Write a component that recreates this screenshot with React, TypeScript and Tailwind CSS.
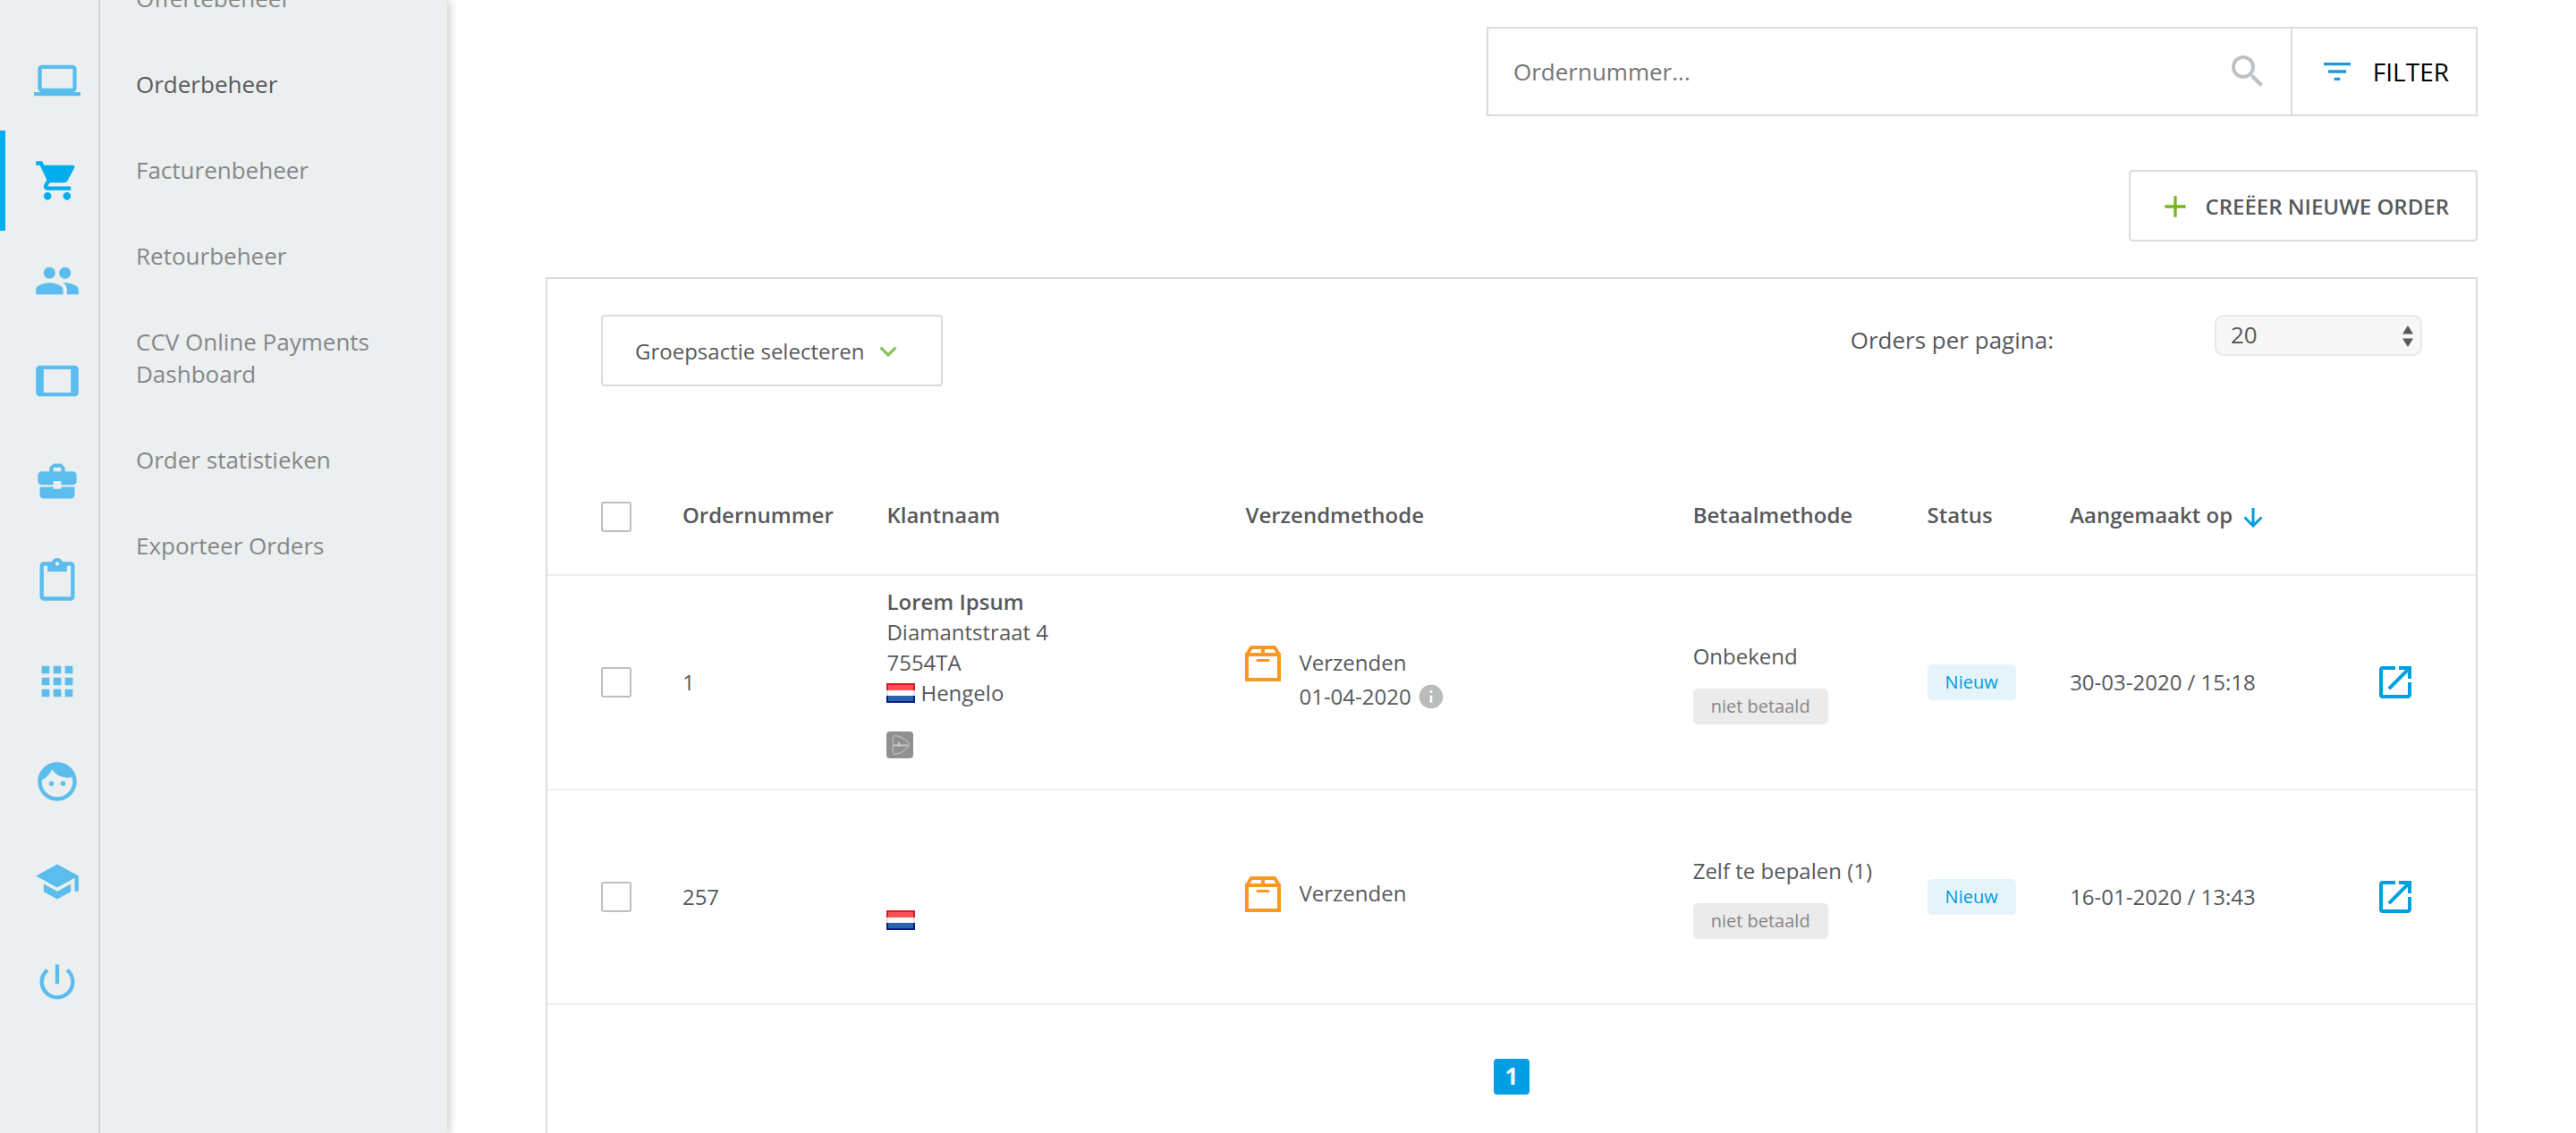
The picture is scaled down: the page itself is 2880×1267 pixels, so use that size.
import type { ReactNode } from 'react';
import {
  MdAdd,
  MdApps,
  MdBusinessCenter,
  MdContentPaste,
  MdExpandMore,
  MdFace,
  MdFilterList,
  MdInfo,
  MdLaptop,
  MdOpenInNew,
  MdPeople,
  MdPowerSettingsNew,
  MdSchool,
  MdSearch,
  MdShoppingCart,
  MdTablet,
} from 'react-icons/md';

const RAIL = [
  { label: 'Webshop', icon: MdLaptop },
  { label: 'Orders', icon: MdShoppingCart, active: true },
  { label: 'Klanten', icon: MdPeople },
  { label: 'Kassa', icon: MdTablet },
  { label: 'Zakelijk', icon: MdBusinessCenter },
  { label: 'Rapporten', icon: MdContentPaste },
  { label: 'Apps', icon: MdApps },
  { label: 'Account', icon: MdFace },
  { label: 'Academy', icon: MdSchool },
  { label: 'Uitloggen', icon: MdPowerSettingsNew },
];

const MENU = [
  'Offertebeheer',
  'Orderbeheer',
  'Facturenbeheer',
  'Retourbeheer',
  'CCV Online Payments Dashboard',
  'Order statistieken',
  'Exporteer Orders',
];

const ORDERS = [
  {
    id: '1',
    customer: { name: 'Lorem Ipsum', street: 'Diamantstraat 4', zip: '7554TA', city: 'Hengelo' },
    shipDate: '01-04-2020',
    payment: 'Onbekend',
    created: '30-03-2020 / 15:18',
  },
  {
    id: '257',
    customer: null,
    shipDate: null,
    payment: 'Zelf te bepalen (1)',
    created: '16-01-2020 / 13:43',
  },
];

function Checkbox({ label }: { label: string }) {
  return (
    <input
      type="checkbox"
      aria-label={label}
      className="block size-[34px] appearance-none rounded-[3px] border-2 border-[#bcbec0] bg-white checked:bg-[#009fe3]"
    />
  );
}

function Flag() {
  return (
    <svg className="h-[22px] w-8 shrink-0" viewBox="0 0 32 22" role="img" aria-label="Nederland">
      <rect width="32" height="8" fill="#dc1a20" />
      <rect x="2" y="2" width="28" height="6" fill="#fb5158" />
      <rect y="8" width="32" height="6" fill="#e3e3ea" />
      <rect x="2" y="8" width="28" height="6" fill="#fff" />
      <rect y="14" width="32" height="8" fill="#0a1f80" />
      <rect x="2" y="14" width="28" height="6" fill="#2a64ae" />
    </svg>
  );
}

function Parcel() {
  return (
    <svg className="size-10 shrink-0" viewBox="0 0 40 40" fill="none" stroke="#f9991f" strokeWidth="4" aria-hidden="true">
      <path d="M2 10h36v28H2z" />
      <path d="M2 10 7 2h26l5 8M20 2v8" />
      <path d="M14 16.500h12" strokeWidth="3" strokeLinecap="round" />
    </svg>
  );
}

function CarrierBadge() {
  return (
    <svg className="size-[30px]" viewBox="0 0 30 30" role="img" aria-label="Vervoerder">
      <rect width="30" height="30" rx="4" fill="#8f9091" />
      <path
        d="M7 9c0-4 2-5 5-4 5 1 9 4 12 7 2 2 2 4 0 6-3 3-7 6-12 7-3 1-5 0-5-4 1-4 1-8 0-12z"
        fill="none"
        stroke="#b5b6b7"
        strokeWidth="1.500"
      />
      <path d="M8 15.500h16M14 12v5" stroke="#c6c7c8" strokeWidth="2" />
    </svg>
  );
}

function Badge({ children, className }: { children: ReactNode; className: string }) {
  return <span className={`inline-block rounded-[5px] px-5 text-[20px] leading-10 ${className}`}>{children}</span>;
}

function Sidebar() {
  return (
    <aside className="z-10 flex w-[500px] shrink-0 bg-[#ebeff0] shadow-[2px_0_10px_rgba(0,0,0,0.22)]">
      <nav aria-label="Hoofdmenu" className="flex w-28 shrink-0 flex-col border-r-2 border-[#d1d5d7] pt-[34px]">
        {RAIL.map(({ label, icon: Icon, active }) => (
          <a
            key={label}
            href="#"
            aria-label={label}
            className={`flex h-28 items-center border-l-6 pl-8 ${
              active ? 'border-[#00aeef] text-[#00aeef]' : 'border-transparent text-[#5bbdee]'
            }`}
          >
            <Icon className="size-[52px]" />
          </a>
        ))}
      </nav>
      {/* scrolled down a little, so the first entry is half out of view */}
      <nav aria-label="Submenu" className="-mt-[50px] flex flex-1 flex-col pr-16 pl-10">
        {MENU.map(item => (
          <a
            key={item}
            href="#"
            className={`py-[30px] text-[26px] leading-9 ${item === 'Orderbeheer' ? 'text-[#58595b]' : 'text-[#868788]'}`}
          >
            {item}
          </a>
        ))}
      </nav>
    </aside>
  );
}

function OrderTable() {
  return (
    <table className="w-full table-fixed text-left">
      <colgroup>
        <col className="w-[7%]" />
        <col className="w-[10.6%]" />
        <col className="w-[18.6%]" />
        <col className="w-[23.2%]" />
        <col className="w-[12.15%]" />
        <col className="w-[7.4%]" />
        <col className="w-[14%]" />
        <col />
      </colgroup>
      <thead>
        <tr className="h-[133px] border-b-2 border-[#efefef]">
          <th className="pt-1 pl-[60px]">
            <Checkbox label="Alles selecteren" />
          </th>
          <th className="font-semibold">Ordernummer</th>
          <th className="font-semibold">Klantnaam</th>
          <th className="font-semibold">Verzendmethode</th>
          <th className="font-semibold">Betaalmethode</th>
          <th className="font-semibold">Status</th>
          <th className="font-semibold">
            <button className="flex items-center gap-3">
              Aangemaakt op
              <svg className="mt-1 h-6 w-[22px] text-[#0a9adb]" viewBox="0 0 22 24" fill="none" stroke="currentColor" strokeWidth="3" aria-hidden="true">
                <path d="M11 2v20M1.500 12.500 11 22l9.500-9.500" />
              </svg>
            </button>
          </th>
          <th aria-label="Acties" />
        </tr>
      </thead>
      <tbody>
        {ORDERS.map(o => (
          <tr key={o.id} className="h-60 border-b-2 border-[#efefef]">
            <td className="pl-[60px]">
              <Checkbox label={`Order ${o.id} selecteren`} />
            </td>
            <td>{o.id}</td>
            <td className="leading-[34px]">
              {o.customer ? (
                <>
                  <p className="font-semibold">{o.customer.name}</p>
                  <p>{o.customer.street}</p>
                  <p>{o.customer.zip}</p>
                  <p className="flex items-center gap-1.5">
                    <Flag />
                    {o.customer.city}
                  </p>
                  <div className="pt-[26px] pb-[22px]">
                    <CarrierBadge />
                  </div>
                </>
              ) : (
                <div className="pt-[52px]">
                  <Flag />
                </div>
              )}
            </td>
            <td className="pb-1.5">
              <div className="flex items-start gap-5">
                <Parcel />
                <div className="leading-[38px]">
                  <p>Verzenden</p>
                  {o.shipDate && (
                    <p className="flex items-center gap-1.5">
                      {o.shipDate}
                      <MdInfo className="size-8 text-[#b9bbbd]" />
                    </p>
                  )}
                </div>
              </div>
            </td>
            <td>
              <p className="mb-[18px] leading-9">{o.payment}</p>
              <Badge className="bg-[#ebebeb] text-[#868788]">niet betaald</Badge>
            </td>
            <td>
              <Badge className="bg-[#e5f4fb] text-[#009bdc]">Nieuw</Badge>
            </td>
            <td>{o.created}</td>
            <td className="pr-[66px]">
              <a href="#" aria-label={`Order ${o.id} openen`} className="ml-auto block w-12 text-[#009fe0]">
                <MdOpenInNew className="size-12" />
              </a>
            </td>
          </tr>
        ))}
      </tbody>
    </table>
  );
}

export default function App() {
  return (
    <div className="flex min-h-screen bg-white font-['Open_Sans','Noto_Sans',sans-serif] text-[24px] text-[#58595b]">
      <div className="flex w-full overflow-hidden">
        <Sidebar />
        <main className="flex flex-1 flex-col px-[110px] pt-[30px]">
          <form className="flex h-[100px] w-[1108px] self-end border-2 border-[#dcdcdc]">
            <label className="flex flex-1 items-center pr-6 pl-7">
              <input
                type="search"
                placeholder="Ordernummer..."
                aria-label="Ordernummer"
                className="min-w-0 flex-1 text-[26px] outline-none placeholder:text-[#757575]"
              />
              <MdSearch className="size-12 text-[#bdc1c4]" />
            </label>
            <button type="button" className="flex items-center gap-5 border-l-2 border-[#dcdcdc] px-[30px] text-[28px] text-black">
              <MdFilterList className="size-10 text-[#1b9ad6]" />
              FILTER
            </button>
          </form>

          <button className="mt-[60px] flex h-20 items-center gap-3.5 self-end rounded border-2 border-[#dcdcdc] px-[30px] pt-0.5 font-semibold">
            <MdAdd className="size-10 text-[#7ab51d]" />
            CREËER NIEUWE ORDER
          </button>

          <section className="mt-10 flex flex-1 flex-col border-2 border-b-0 border-[#dcdcdc]">
            <div className="flex h-[198px] items-start justify-between px-[60px] pt-10">
              <button className="flex h-20 items-center gap-2 rounded border-2 border-[#dcdcdc] pt-0.5 pr-10 pl-9">
                Groepsactie selecteren
                <MdExpandMore className="size-[38px] text-[#85c35d]" />
              </button>
              <div className="flex items-start text-[26px]">
                <label htmlFor="per-page" className="mr-[180px] pt-2.5 leading-9">
                  Orders per pagina:
                </label>
                <div className="relative">
                  <select
                    id="per-page"
                    defaultValue="20"
                    className="h-[46px] w-[232px] appearance-none rounded-[10px] border-2 border-[#e8e8e8] bg-[#f7f7f7] px-4 pb-0.5"
                  >
                    <option>20</option>
                    <option>50</option>
                    <option>100</option>
                  </select>
                  <svg className="pointer-events-none absolute top-3 right-2.5 h-6 w-3" viewBox="0 0 12 24" fill="#58595b" aria-hidden="true">
                    <path d="M6 0l6 9.500H0zM6 24l6-9.500H0z" />
                  </svg>
                </div>
              </div>
            </div>
            <OrderTable />
            <nav aria-label="Paginering" className="flex justify-center pt-[60px] pb-11">
              <a href="#" aria-current="page" className="size-10 rounded bg-[#009fe3] text-center text-[26px] leading-[38px] font-bold text-white">
                1
              </a>
            </nav>
          </section>
        </main>
      </div>
    </div>
  );
}
